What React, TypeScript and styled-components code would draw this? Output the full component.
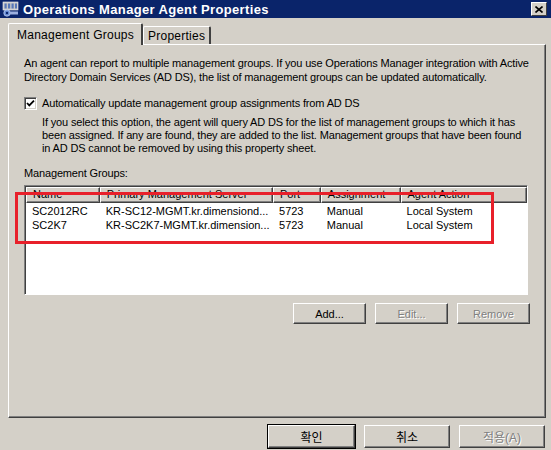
import React from 'react';
import styled, { createGlobalStyle } from 'styled-components';

const GlobalStyle = createGlobalStyle`
  html, body {
    margin: 0;
    padding: 0;
    background: #d4d0c8;
  }
  body {
    width: 551px;
    height: 450px;
    overflow: hidden;
    font-family: Tahoma, "Liberation Sans", "Noto Sans CJK KR", sans-serif;
    font-size: 11px;
    color: #000;
  }
`;

const Window = styled.div`
  width: 551px;
  height: 450px;
  background: #d4d0c8;
  display: flex;
  flex-direction: column;
`;

const TitleBar = styled.div`
  height: 18px;
  background: #0a246a;
  display: flex;
  align-items: center;
  padding: 0 4px 0 2px;
  gap: 4px;
`;

const TitleText = styled.div`
  flex: 1;
  color: #fff;
  font-family: "Liberation Sans", sans-serif;
  font-weight: bold;
  font-size: 13px;
  letter-spacing: 0.35px;
`;

const CloseButton = styled.div`
  width: 16px;
  height: 14px;
  box-sizing: border-box;
  background: #d4d0c8;
  border-top: 1px solid #fff;
  border-left: 1px solid #fff;
  border-right: 1px solid #404040;
  border-bottom: 1px solid #404040;
  display: flex;
  align-items: center;
  justify-content: center;
`;

const Body = styled.div`
  display: flex;
  flex-direction: column;
  padding: 4px 5px 0 8px;
`;

const TabRow = styled.div`
  display: flex;
  align-items: flex-end;
  height: 22px;
  position: relative;
  z-index: 1;
`;

const Tab = styled.div<{ $active?: boolean }>`
  box-sizing: border-box;
  height: ${(p) => (p.$active ? 22 : 18)}px;
  padding: 0 ${(p) => (p.$active ? 7 : 4)}px 0 ${(p) => (p.$active ? 8 : 4)}px;
  margin-bottom: ${(p) => (p.$active ? -1 : 0)}px;
  display: flex;
  align-items: center;
  font-family: "Liberation Sans", sans-serif;
  font-size: 12px;
  letter-spacing: 0.25px;
  background: #d4d0c8;
  border-top: 1px solid #fff;
  border-left: 1px solid #fff;
  border-right: 2px solid #404040;
  border-top-left-radius: 2px;
  border-top-right-radius: 2px;
`;

const Panel = styled.div`
  box-sizing: border-box;
  height: 374px;
  border-top: 1px solid #fff;
  border-left: 1px solid #fff;
  border-right: 1px solid #404040;
  border-bottom: 1px solid #404040;
  box-shadow: inset -1px -1px 0 #808080;
  padding: 11px 15px 0 15px;
  display: flex;
  flex-direction: column;
  font-family: "Liberation Sans", sans-serif;
  font-size: 11px;
`;

const Paragraph = styled.div<{ $indent?: number; $top?: number; $lh?: number }>`
  line-height: ${(p) => p.$lh ?? 14}px;
  margin-left: ${(p) => p.$indent ?? 0}px;
  margin-top: ${(p) => p.$top ?? 0}px;
  letter-spacing: -0.15px;
`;

const CheckRow = styled.div`
  display: flex;
  align-items: center;
  gap: 5px;
  margin-top: 12px;
  height: 14px;
  letter-spacing: -0.15px;
`;

const CheckBox = styled.div`
  width: 13px;
  height: 13px;
  box-sizing: border-box;
  background: #fff;
  border-top: 1px solid #808080;
  border-left: 1px solid #808080;
  border-right: 1px solid #fff;
  border-bottom: 1px solid #fff;
  box-shadow: inset 1px 1px 0 #404040, inset -1px -1px 0 #d4d0c8;
  display: flex;
  align-items: center;
  justify-content: center;
`;

const ListWrap = styled.div`
  position: relative;
  margin-top: 5px;
`;

const List = styled.div`
  box-sizing: border-box;
  width: 504px;
  height: 110px;
  background: #fff;
  border-top: 1px solid #808080;
  border-left: 1px solid #808080;
  border-right: 1px solid #fff;
  border-bottom: 1px solid #fff;
  box-shadow: inset 1px 1px 0 #404040;
  display: flex;
  flex-direction: column;
`;

const HeaderRow = styled.div`
  display: flex;
  height: 16px;
  margin: 1px 0 0 1px;
`;

const HeaderCell = styled.div<{ $w: number }>`
  box-sizing: border-box;
  width: ${(p) => p.$w}px;
  height: 16px;
  background: #d4d0c8;
  border-top: 1px solid #fff;
  border-left: 1px solid #fff;
  border-right: 1px solid #404040;
  border-bottom: 1px solid #404040;
  box-shadow: inset -1px -1px 0 #808080;
  padding-left: 6px;
  line-height: 13px;
  white-space: nowrap;
  overflow: hidden;
`;

const Rows = styled.div`
  display: flex;
  flex-direction: column;
  padding: 1px 0 0 1px;
`;

const Row = styled.div`
  display: flex;
  height: 14px;
  line-height: 14px;
`;

const Cell = styled.div<{ $w: number }>`
  width: ${(p) => p.$w}px;
  padding-left: 6px;
  box-sizing: border-box;
  white-space: nowrap;
  overflow: hidden;
`;

const Highlight = styled.div`
  position: absolute;
  left: -9px;
  top: 7px;
  width: 479px;
  height: 52px;
  box-sizing: border-box;
  border: 3px solid #e8202a;
  pointer-events: none;
`;

const ButtonRow = styled.div<{ $top: number; $gap: number }>`
  display: flex;
  justify-content: flex-end;
  gap: ${(p) => p.$gap}px;
  margin-top: ${(p) => p.$top}px;
`;

const PanelButtons = styled(ButtonRow)`
  margin-right: -1px;
`;

const Button = styled.div<{ $w: number; $h: number; $disabled?: boolean; $default?: boolean }>`
  box-sizing: border-box;
  width: ${(p) => p.$w}px;
  height: ${(p) => p.$h}px;
  background: #d4d0c8;
  border: 1px solid ${(p) => (p.$default ? '#000' : 'transparent')};
  display: flex;
  align-items: center;
  justify-content: center;
  position: relative;
  color: ${(p) => (p.$disabled ? '#808080' : '#000')};
  text-shadow: ${(p) => (p.$disabled ? '1px 1px 0 #fff' : 'none')};
  font-family: "Liberation Sans", "Noto Sans CJK KR", sans-serif;
  font-size: ${(p) => (p.$default !== undefined ? 12 : 11)}px;

  &::before {
    content: '';
    position: absolute;
    inset: 0;
    border-top: 1px solid #fff;
    border-left: 1px solid #fff;
    border-right: 1px solid #404040;
    border-bottom: 1px solid #404040;
    box-shadow: inset -1px -1px 0 #808080;
  }
`;

const Footer = styled(ButtonRow)`
  padding-right: 5px;
`;

const columns = [74, 174, 48, 80, 127];
const headers = ['Name', 'Primary Management Server', 'Port', 'Assignment', 'Agent Action'];
const groups = [
  ['SC2012RC', 'KR-SC12-MGMT.kr.dimensiond...', '5723', 'Manual', 'Local System'],
  ['SC2K7', 'KR-SC2K7-MGMT.kr.dimension...', '5723', 'Manual', 'Local System'],
];

const AppIcon = () => (
  <svg width="17" height="16" viewBox="0 0 17 16">
    <rect x="1" y="1" width="15" height="8" fill="#c8c8c8" stroke="#f0f0f0" strokeWidth="0.6" />
    <rect x="2.5" y="2.5" width="2.2" height="5" fill="#5878b8" />
    <rect x="6" y="2.5" width="2.2" height="5" fill="#5878b8" />
    <rect x="9.5" y="2.5" width="2.2" height="5" fill="#5878b8" />
    <rect x="13" y="2.5" width="2" height="5" fill="#5878b8" />
    <circle cx="5" cy="12" r="3.2" fill="#6a8fd8" stroke="#c0d0f0" strokeWidth="0.8" />
    <circle cx="5" cy="12" r="1.2" fill="#0a246a" />
    <rect x="8" y="10.5" width="8" height="3" fill="#9cb0e0" />
  </svg>
);

export default function App() {
  return (
    <Window>
      <GlobalStyle />
      <TitleBar>
        <AppIcon />
        <TitleText>Operations Manager Agent Properties</TitleText>
        <CloseButton>
          <svg width="8" height="7" viewBox="0 0 8 7">
            <path d="M0.5 0.5 L7.5 6.5 M7.5 0.5 L0.5 6.5" stroke="#000" strokeWidth="1.6" />
          </svg>
        </CloseButton>
      </TitleBar>
      <Body>
        <TabRow>
          <Tab $active>Management Groups</Tab>
          <Tab>Properties</Tab>
        </TabRow>
        <Panel>
          <Paragraph>
            An agent can report to multiple management groups. If you use Operations Manager integration with Active
            <br />
            Directory Domain Services (AD DS), the list of management groups can be updated automatically.
          </Paragraph>
          <CheckRow>
            <CheckBox>
              <svg width="9" height="9" viewBox="0 0 9 9">
                <path d="M1 4 L3.3 6.4 L8 1.6" stroke="#000" strokeWidth="1.8" fill="none" />
              </svg>
            </CheckBox>
            Automatically update management group assignments from AD DS
          </CheckRow>
          <Paragraph $indent={18} $top={6} $lh={13}>
            If you select this option, the agent will query AD DS for the list of management groups to which it has
            <br />
            been assigned. If any are found, they are added to the list. Management groups that have been found
            <br />
            in AD DS cannot be removed by using this property sheet.
          </Paragraph>
          <Paragraph $top={11}>Management Groups:</Paragraph>
          <ListWrap>
            <List>
              <HeaderRow>
                {headers.map((h, i) => (
                  <HeaderCell key={h} $w={columns[i]}>
                    {h}
                  </HeaderCell>
                ))}
              </HeaderRow>
              <Rows>
                {groups.map((g) => (
                  <Row key={g[0]}>
                    {g.map((c, i) => (
                      <Cell key={i} $w={columns[i]}>
                        {c}
                      </Cell>
                    ))}
                  </Row>
                ))}
              </Rows>
            </List>
            <Highlight />
          </ListWrap>
          <PanelButtons $top={7} $gap={7}>
            <Button $w={75} $h={23}>Add...</Button>
            <Button $w={75} $h={23} $disabled>Edit...</Button>
            <Button $w={75} $h={23} $disabled>Remove</Button>
          </PanelButtons>
        </Panel>
      </Body>
      <Footer $top={6} $gap={7}>
        <Button $w={89} $h={25} $default>확인</Button>
        <Button $w={88} $h={25} $default={false}>취소</Button>
        <Button $w={88} $h={25} $default={false} $disabled>적용(A)</Button>
      </Footer>
    </Window>
  );
}
